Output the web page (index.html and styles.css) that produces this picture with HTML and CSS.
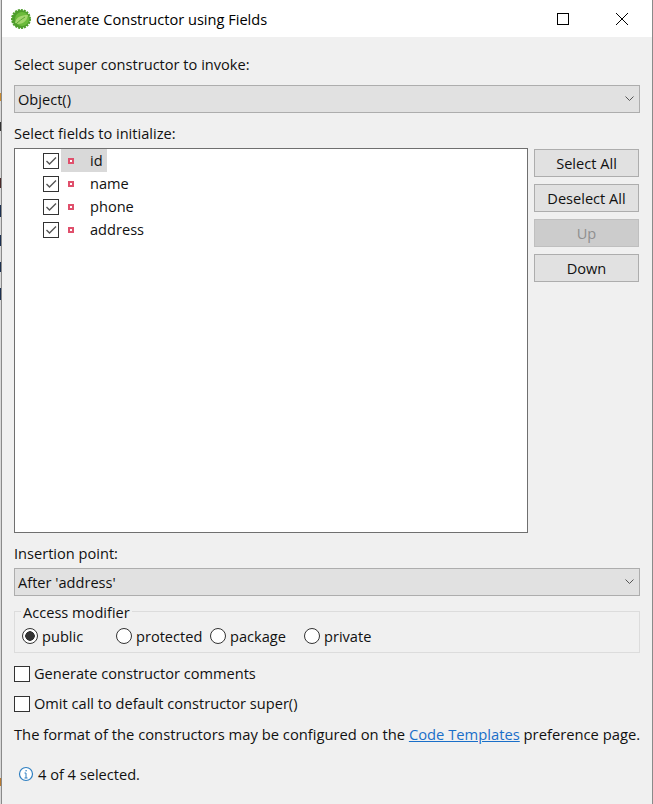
FILE: index.html
```html
<!DOCTYPE html>
<html>
<head>
    <meta charset="UTF-8">
    <title>Generate Constructor using Fields</title>
    <link rel="stylesheet" href="styles.css">
</head>
<body>
    <div id="main_window">
        <div class="titlebar">
            <svg class="app_icon" width="20" height="20" viewBox="0 0 20 20">
                <circle cx="10" cy="10" r="9" fill="#4f9e2c" stroke="#4f9e2c" stroke-width="2" stroke-dasharray="2 1"/>
                <circle cx="11" cy="10" r="7" fill="#6cbb3c"/>
                <path d="M4 14C5 8 10 6 17 6C16 12 12 15 7 15Z" fill="#a5d66f"/>
                <path d="M5 15C8 12 11 10 14 8" stroke="#5aa535" fill="none"/>
            </svg>
            <span class="title">Generate Constructor using Fields</span>
            <div class="win_btn">
                <svg width="12" height="12" viewBox="0 0 12 12"><rect x="0.5" y="0.5" width="11" height="11" fill="none" stroke="#000"/></svg>
            </div>
            <div class="win_btn">
                <svg width="12" height="12" viewBox="0 0 12 12"><path d="M0 0L12 12M12 0L0 12" stroke="#000" fill="none"/></svg>
            </div>
        </div>
        <div class="content">
            <div class="label first">Select super constructor to invoke:</div>
            <div class="combo"><span>Object()</span>
                <svg width="9" height="6" viewBox="0 0 9 6"><path d="M0.5 0.5L4.5 4.5L8.5 0.5" stroke="#555" fill="none"/></svg>
            </div>
            <div class="label fields_label">Select fields to initialize:</div>
            <div class="fields">
                <div class="table">
                    <div class="row">
                        <span class="check on"><svg width="14" height="14" viewBox="0 0 14 14"><path d="M2.5 7L5.5 10L12 3.5" stroke="#555" stroke-width="1.4" fill="none"/></svg></span>
                        <span class="row_text selected"><span class="field_icon"></span>id</span>
                    </div>
                    <div class="row">
                        <span class="check on"><svg width="14" height="14" viewBox="0 0 14 14"><path d="M2.5 7L5.5 10L12 3.5" stroke="#555" stroke-width="1.4" fill="none"/></svg></span>
                        <span class="row_text"><span class="field_icon"></span>name</span>
                    </div>
                    <div class="row">
                        <span class="check on"><svg width="14" height="14" viewBox="0 0 14 14"><path d="M2.5 7L5.5 10L12 3.5" stroke="#555" stroke-width="1.4" fill="none"/></svg></span>
                        <span class="row_text"><span class="field_icon"></span>phone</span>
                    </div>
                    <div class="row">
                        <span class="check on"><svg width="14" height="14" viewBox="0 0 14 14"><path d="M2.5 7L5.5 10L12 3.5" stroke="#555" stroke-width="1.4" fill="none"/></svg></span>
                        <span class="row_text"><span class="field_icon"></span>address</span>
                    </div>
                </div>
                <div class="buttons">
                    <div class="btn">Select All</div>
                    <div class="btn">Deselect All</div>
                    <div class="btn disabled">Up</div>
                    <div class="btn">Down</div>
                </div>
            </div>
            <div class="label insertion_label">Insertion point:</div>
            <div class="combo"><span>After 'address'</span>
                <svg width="9" height="6" viewBox="0 0 9 6"><path d="M0.5 0.5L4.5 4.5L8.5 0.5" stroke="#555" fill="none"/></svg>
            </div>
            <div class="group">
                <span class="legend">Access modifier</span>
                <div class="radio r_wide"><span class="dot on"></span>public</div>
                <div class="radio r_wide"><span class="dot"></span>protected</div>
                <div class="radio r_wide"><span class="dot"></span>package</div>
                <div class="radio"><span class="dot"></span>private</div>
            </div>
            <div class="option"><span class="check"></span>Generate constructor comments</div>
            <div class="option"><span class="check"></span>Omit call to default constructor super()</div>
            <div class="note">The format of the constructors may be configured on the <a class="link">Code Templates</a> preference page.</div>
            <div class="status">
                <svg width="16" height="16" viewBox="0 0 16 16"><circle cx="8" cy="8" r="6.5" fill="#fff" stroke="#2f7fc1" stroke-width="1.2"/><path d="M8 7V12M6.5 12H9.5M6.5 7H8" stroke="#2f7fc1" fill="none"/><rect x="7.5" y="4" width="1.2" height="1.4" fill="#2f7fc1"/></svg>
                <span>4 of 4 selected.</span>
            </div>
        </div>
    </div>
</body>
</html>
```
FILE: styles.css
```css
html, body {
    margin: 0;
    height: 100%;
    overflow: hidden;
}
body {
    /* the desktop showing through left of the dialog */
    background: linear-gradient(to bottom,
        #d8d8d8 93px, #c98a2e 93px, #c98a2e 101px,
        #d8d8d8 101px, #d8d8d8 122px, #333 122px, #333 131px,
        #d8d8d8 131px, #d8d8d8 178px, #4a2a2a 178px, #4a2a2a 188px,
        #d8d8d8 188px, #d8d8d8 205px, #1c3050 205px, #1c3050 217px,
        #d8d8d8 217px, #d8d8d8 235px, #1c3050 235px, #1c3050 246px,
        #d8d8d8 246px, #d8d8d8 262px, #1c3050 262px, #1c3050 272px,
        #d8d8d8 272px, #d8d8d8 288px, #1c3050 288px, #1c3050 300px,
        #d8d8d8 300px, #d8d8d8 778px, #b87a30 778px, #b87a30 786px,
        #d8d8d8 786px);
    font-family: "Open Sans", "Noto Sans", sans-serif;
    font-size: 14.6px;
    color: #111;
}
#main_window {
    box-sizing: border-box;
    width: 652px;
    height: 804px;
    margin-left: 1px;
    border-left: 1px solid #8a8a8a;
    border-right: 1px solid #8a8a8a;
    background-color: #f0f0f0;
    display: flex;
    flex-direction: column;
}
.titlebar {
    height: 37px;
    flex: none;
    background-color: #fff;
    display: flex;
    align-items: center;
    padding-left: 9px;
    padding-right: 1px;
}
.app_icon {
    margin-right: 5px;
}
.title {
    flex: 1;
    color: #000;
}
.win_btn {
    width: 59px;
    display: flex;
    justify-content: center;
}
.content {
    padding: 0 12px;
    display: flex;
    flex-direction: column;
}
.label {
    line-height: 20px;
}
.first {
    margin-top: 17px;
    margin-bottom: 11px;
}
.combo {
    box-sizing: border-box;
    height: 28px;
    width: 626px;
    border: 1px solid #adadad;
    background-color: #e1e1e1;
    display: flex;
    align-items: center;
    justify-content: space-between;
    padding: 0 5px 0 3px;
}
.fields_label {
    margin-top: 10px;
    margin-bottom: 5px;
}
.fields {
    display: flex;
    align-items: flex-start;
}
.table {
    box-sizing: border-box;
    width: 514px;
    height: 385px;
    border: 1px solid #6f6f6f;
    background-color: #fff;
}
.row {
    height: 23px;
    display: flex;
    align-items: center;
    padding-left: 28px;
}
.check {
    box-sizing: border-box;
    width: 16px;
    height: 16px;
    flex: none;
    border: 1px solid #333;
    background-color: #fff;
    display: flex;
    align-items: center;
    justify-content: center;
}
.row .check {
    margin-top: 1px;
}
.row_text {
    box-sizing: border-box;
    display: flex;
    align-items: center;
    height: 23px;
    margin-left: 2px;
    padding: 0 4px 2px 7px;
}
.field_icon {
    box-sizing: border-box;
    width: 6px;
    height: 6px;
    margin-top: 2px;
    margin-right: 16px;
    border: 2px solid #e0506c;
    background-color: #fff;
}
.selected {
    background-color: #d9d9d9;
}
.buttons {
    margin-left: 6px;
    margin-top: 1px;
    display: flex;
    flex-direction: column;
    gap: 7px;
}
.btn {
    box-sizing: border-box;
    width: 105px;
    height: 28px;
    border: 1px solid #adadad;
    background-color: #e1e1e1;
    display: flex;
    align-items: center;
    justify-content: center;
}
.disabled {
    background-color: #cccccc;
    border-color: #bfbfbf;
    color: #8f8f8f;
}
.insertion_label {
    margin-top: 10px;
    margin-bottom: 5px;
}
.group {
    box-sizing: border-box;
    position: relative;
    width: 626px;
    height: 42px;
    margin-top: 15px;
    border: 1px solid #dcdcdc;
    display: flex;
    align-items: center;
    padding: 8px 0 0 7px;
}
.legend {
    position: absolute;
    left: 6px;
    top: -9px;
    padding: 0 2px;
    line-height: 18px;
    background-color: #f0f0f0;
}
.radio {
    display: flex;
    align-items: center;
    gap: 4px;
}
.r_wide {
    width: 94px;
}
.dot {
    box-sizing: border-box;
    width: 16px;
    height: 16px;
    border: 1px solid #333;
    border-radius: 50%;
    background-color: #fff;
}
.dot.on {
    background: radial-gradient(circle, #333 0 4.5px, #fff 5px);
}
.option {
    box-sizing: border-box;
    display: flex;
    align-items: center;
    gap: 4px;
    height: 20px;
    padding-bottom: 2px;
    margin-top: 10px;
}
.option .check {
    margin-top: 2px;
}
.group + .option {
    margin-top: 11px;
}
.note {
    margin-top: 10px;
    line-height: 20px;
    font-size: 14.75px;
    white-space: nowrap;
}
.link {
    color: #1a6fc9;
    text-decoration: underline;
}
.status {
    margin-top: 20px;
    margin-left: 4px;
    display: flex;
    align-items: center;
    gap: 4px;
    line-height: 20px;
}
```
